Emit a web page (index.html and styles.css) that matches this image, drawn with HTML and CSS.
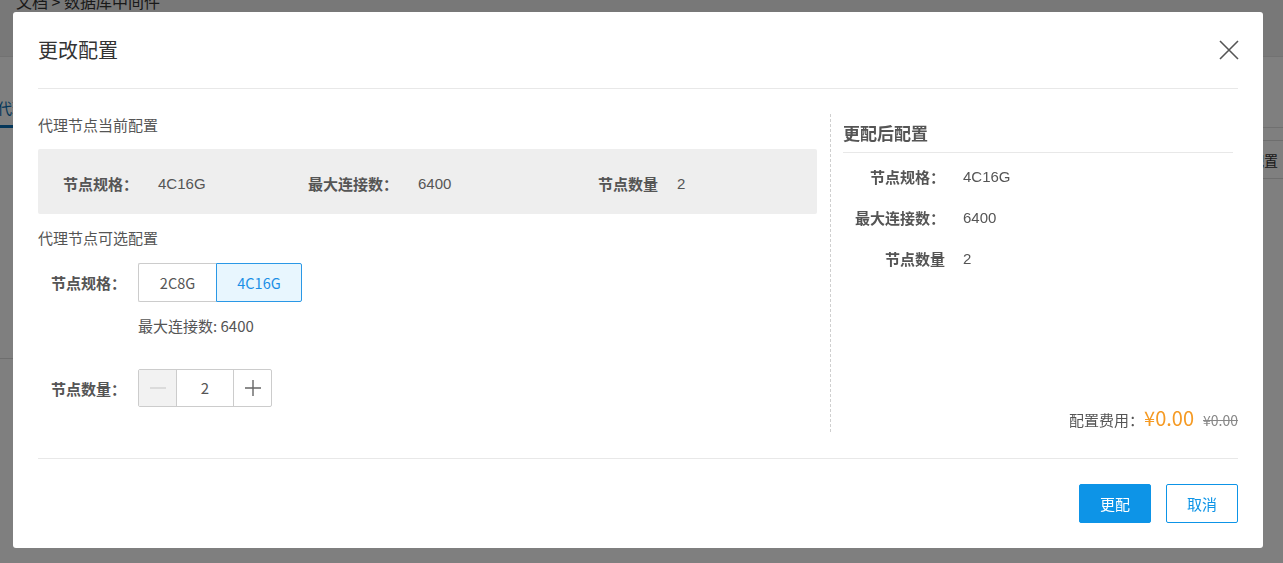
FILE: index.html
```html
<!DOCTYPE html>
<html lang="zh-CN">
<head>
<meta charset="utf-8">
<title>更改配置</title>
<link rel="stylesheet" href="styles.css">
</head>
<body>
<div class="page">
  <div class="topbar"><div class="crumbs">文档 &gt; 数据库中间件</div></div>
  <div class="content">
    <div class="tabs"><span class="tab active">代理节点</span></div>
    <div class="side-table">
      <div class="st-row st-thin"></div>
      <div class="st-row st-text">配置</div>
    </div>
    <div class="hr-left"></div>
  </div>
</div>
<div class="mask"></div>
<div class="modal">
  <div class="modal-header">
    <div class="modal-title">更改配置</div>
    <button class="close" aria-label="关闭">
      <svg width="20" height="20" viewBox="0 0 20 20"><path d="M1 1L19 19M19 1L1 19" stroke="#555" stroke-width="1.6" fill="none"/></svg>
    </button>
  </div>
  <div class="modal-body">
    <div class="col-left">
      <div class="sec-title">代理节点当前配置</div>
      <div class="cur-box">
        <div class="cur-item w1"><span class="lbl">节点规格：</span><span class="val">4C16G</span></div>
        <div class="cur-item w2"><span class="lbl">最大连接数：</span><span class="val">6400</span></div>
        <div class="cur-item"><span class="lbl">节点数量</span><span class="val">2</span></div>
      </div>
      <div class="sec-title sec2">代理节点可选配置</div>
      <div class="form-row spec-row">
        <span class="f-lbl">节点规格：</span>
        <div class="seg">
          <span class="seg-btn b1">2C8G</span>
          <span class="seg-btn b2 on">4C16G</span>
        </div>
      </div>
      <div class="tip">最大连接数: 6400</div>
      <div class="form-row num-row">
        <span class="f-lbl">节点数量：</span>
        <div class="stepper">
          <span class="st-btn minus"><svg width="16" height="16" viewBox="0 0 16 16"><path d="M0 8H16" stroke="#c4c4c4" stroke-width="1"/></svg></span>
          <span class="st-val">2</span>
          <span class="st-btn plus"><svg width="16" height="16" viewBox="0 0 16 16"><path d="M0 8H16M8 0V16" stroke="#666" stroke-width="1.4"/></svg></span>
        </div>
      </div>
    </div>
    <div class="col-right">
      <div class="r-title">更配后配置</div>
      <div class="r-row"><span class="r-lbl">节点规格：</span><span class="r-val">4C16G</span></div>
      <div class="r-row"><span class="r-lbl">最大连接数：</span><span class="r-val">6400</span></div>
      <div class="r-row"><span class="r-lbl">节点数量</span><span class="r-val">2</span></div>
      <div class="price"><span class="p-lbl">配置费用：</span><span class="p-now">¥0.00</span><span class="p-old">¥0.00</span></div>
    </div>
  </div>
  <div class="modal-footer">
    <button class="btn primary">更配</button>
    <button class="btn ghost">取消</button>
  </div>
</div>
</body>
</html>
```
FILE: styles.css
```css
* { box-sizing: border-box; }
html, body { margin: 0; padding: 0; }
body {
  width: 1283px;
  height: 563px;
  overflow: hidden;
  background: #fff;
  font-family: "Liberation Sans", "Noto Sans CJK SC", sans-serif;
  font-size: 15px;
  color: #555;
}
.page { width: 1283px; height: 563px; }
.topbar {
  height: 57px;
  background: #f0f0f0;
  border-bottom: 1px solid #e4e4e4;
  overflow: hidden;
}
.crumbs {
  margin-top: -9px;
  padding-left: 16px;
  font-size: 16px;
  line-height: 20px;
  color: #333;
  font-family: "Noto Sans CJK SC", sans-serif;
}
.content { position: relative; height: 505px; }
.tabs {
  margin-left: -3px;
  padding-top: 34px;
  display: flex;
}
.tab {
  font-family: "Noto Sans CJK SC", sans-serif;
  font-size: 15px;
  line-height: 34px;
  color: #0a6fb4;
  border-bottom: 3px solid #0a6fb4;
  width: 80px;
}
.side-table {
  position: absolute;
  left: 1250px;
  top: 70px;
  width: 80px;
  border-top: 1px solid #e0e0e0;
}
.st-row { border-bottom: 1px solid #dcdcdc; }
.st-thin { height: 13px; }
.st-text {
  height: 38px;
  line-height: 38px;
  font-family: "Noto Sans CJK SC", sans-serif;
  font-size: 14px;
  color: #333;
}
.hr-left {
  position: absolute;
  left: 0;
  top: 301px;
  width: 40px;
  border-top: 1px solid #dcdcdc;
}
.mask {
  position: fixed;
  inset: 0;
  background: rgba(0, 0, 0, 0.5);
}
.modal {
  position: fixed;
  left: 13px;
  top: 12px;
  width: 1250px;
  height: 536px;
  background: #fff;
  border-radius: 3px;
  display: flex;
  flex-direction: column;
}
.modal-header {
  margin: 0 25px;
  padding: 26px 0;
  border-bottom: 1px solid #e8e8e8;
  display: flex;
  align-items: center;
  justify-content: space-between;
}
.modal-title {
  font-family: "Noto Sans CJK SC", sans-serif;
  font-size: 20px;
  line-height: 24px;
  color: #333;
}
.close {
  border: 0;
  background: none;
  padding: 0;
  width: 20px;
  height: 20px;
  margin-right: -1px;
  display: flex;
}
.modal-body {
  margin: 0 25px;
  padding: 25px 0 26px;
  display: grid;
  grid-template-columns: 779px 1fr;
  column-gap: 13px;
}
.col-left { display: flex; flex-direction: column; }
.sec-title {
  font-family: "Noto Sans CJK SC", sans-serif;
  font-size: 15px;
  line-height: 22px;
  color: #555;
}
.sec2 { margin-top: 13px; }
.cur-box {
  margin-top: 13px;
  height: 65px;
  background: #eeeeee;
  border-radius: 2px;
  padding: 4px 0 0 25px;
  display: flex;
  align-items: center;
}
.cur-item { display: flex; align-items: center; }
.cur-item.w1 { width: 245px; }
.cur-item.w2 { width: 290px; }
.lbl {
  font-family: "Noto Sans CJK SC", sans-serif;
  font-weight: bold;
  color: #555;
  margin-right: 20px;
}
.cur-item:last-child .lbl { margin-right: 19px; }
.val { color: #555; }
.form-row { display: flex; align-items: center; }
.f-lbl {
  width: 100px;
  padding-left: 13px;
  font-family: "Noto Sans CJK SC", sans-serif;
  font-weight: bold;
  color: #555;
}
.spec-row { margin-top: 14px; }
.seg { display: flex; }
.seg-btn {
  height: 39px;
  line-height: 37px;
  border: 1px solid #cccccc;
  text-align: center;
  font-family: "Noto Sans CJK SC", sans-serif;
  font-size: 14.5px;
  color: #555;
  background: #fff;
}
.seg-btn.b1 { width: 78px; border-radius: 2px 0 0 2px; border-right: 0; }
.seg-btn.b2 { width: 86px; border-radius: 0 2px 2px 0; }
.seg-btn.on { border-color: #2a98e6; background: #e8f6fe; color: #1b8fe6; }
.tip {
  margin-top: 14px;
  margin-left: 100px;
  line-height: 20px;
  font-family: "Noto Sans CJK SC", sans-serif;
  color: #555;
}
.num-row { margin-top: 33px; }
.stepper {
  display: flex;
  height: 38px;
  border: 1px solid #cccccc;
  border-radius: 2px;
}
.st-btn {
  width: 38px;
  display: flex;
  align-items: center;
  justify-content: center;
}
.st-btn.minus { background: #f2f2f2; border-right: 1px solid #cccccc; }
.st-btn.plus { border-left: 1px solid #cccccc; }
.st-val {
  width: 56px;
  text-align: center;
  line-height: 36px;
  font-family: "Noto Sans CJK SC", sans-serif;
  font-size: 15px;
  color: #555;
}
.col-right {
  border-left: 1px dashed #cfcfcf;
  padding-left: 12px;
  min-height: 318px;
  display: flex;
  flex-direction: column;
}
.r-title {
  margin: 7px 5px 3px 0;
  padding-bottom: 7px;
  border-bottom: 1px solid #e8e8e8;
  font-family: "Noto Sans CJK SC", sans-serif;
  font-weight: bold;
  font-size: 17px;
  line-height: 24px;
  color: #555;
}
.r-row { display: flex; align-items: center; height: 41px; }
.r-lbl {
  width: 102px;
  text-align: right;
  font-family: "Noto Sans CJK SC", sans-serif;
  font-weight: bold;
  color: #555;
}
.r-val { margin-left: 18px; color: #555; }
.price {
  margin-top: auto;
  display: flex;
  justify-content: flex-end;
  align-items: baseline;
  line-height: 24px;
  font-family: "Noto Sans CJK SC", sans-serif;
}
.p-lbl { font-size: 15px; color: #555; }
.p-now { font-size: 20px; color: #f59a23; }
.p-old { font-size: 14px; color: #888; text-decoration: line-through; margin-left: 9px; }
.modal-footer {
  margin: 0 25px;
  padding: 25px 0;
  border-top: 1px solid #e8e8e8;
  display: flex;
  justify-content: flex-end;
  gap: 15px;
}
.btn {
  width: 72px;
  height: 39px;
  border-radius: 2px;
  font-family: "Noto Sans CJK SC", sans-serif;
  font-size: 15px;
  padding: 0;
  cursor: pointer;
}
.btn.primary { background: #0d94e7; border: 1px solid #0d94e7; color: #fff; }
.btn.ghost { background: #fff; border: 1px solid #0d94e7; color: #0d94e7; }
```
